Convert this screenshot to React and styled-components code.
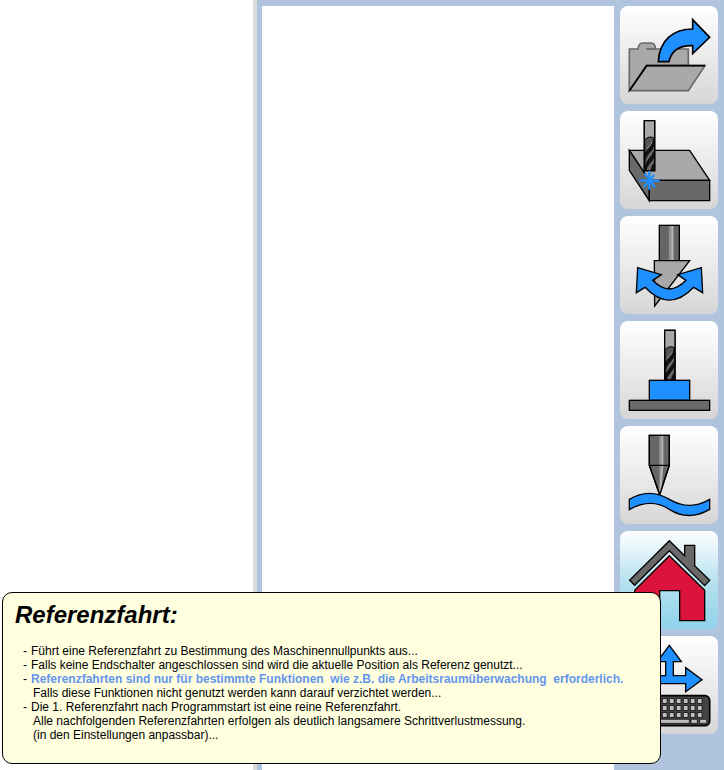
import React from "react";
import styled, { createGlobalStyle } from "styled-components";

const GlobalStyle = createGlobalStyle`
  * { box-sizing: border-box; }
  body {
    margin: 0;
    background: #ffffff;
    font-family: "Liberation Sans", Arial, sans-serif;
    color: #000000;
  }
`;

const Workspace = styled.main`
  position: relative;
  display: grid;
  grid-template-columns: minmax(0, 18fr) minmax(0, 25fr) auto;
  min-height: 100vh;
  overflow: hidden;
  background: #b0c4de;
`;

const PreviewPane = styled.section`
  background: #ffffff;
  border-right: 4px solid #dcdcdc;
`;

const ProgramPane = styled.section`
  margin: 6px 0 0 5px;
  background: #ffffff;
`;

const Toolbar = styled.nav`
  display: flex;
  flex-direction: column;
  gap: 7px;
  padding: 6px;
`;

const ToolButton = styled.button`
  width: 98px;
  height: 98px;
  padding: 0;
  border: 0;
  border-radius: 8px;
  background: ${({ $active }) =>
    $active
      ? "linear-gradient(#ffffff, #b8e2f0 50%, #8fd2ea)"
      : "linear-gradient(#ffffff, #ebebeb 50%, #d6d6d6)"};
  cursor: pointer;
`;

const Icon = styled.svg`
  display: block;
  width: 100%;
  height: 100%;
  stroke: #000000;
  stroke-width: 4;
`;

const HelpBubble = styled.aside`
  position: absolute;
  left: 2px;
  right: 63px;
  bottom: 6px;
  padding: 8px 12px 21px;
  border: 1px solid #000000;
  border-radius: 10px;
  background: #ffffe0;
`;

const HelpTitle = styled.h1`
  margin: 0 0 15px;
  font-size: 24px;
  line-height: 28px;
  font-style: italic;
  font-weight: bold;
`;

const HelpList = styled.ul`
  margin: 0;
  padding: 0 0 0 8px;
  list-style: none;
  font-size: 12px;
  line-height: 14px;
`;

const HelpItem = styled.li`
  display: grid;
  grid-template-columns: 8px 1fr;
`;

const HelpDetail = styled.div`
  padding-left: 2px;
`;

const Highlight = styled.strong`
  color: #6495ed;
  white-space: pre-wrap;
`;

function Cutter({ x, y }) {
  return (
    <g transform={`translate(${x} ${y})`}>
      <rect width="31" height="150" fill="#696969" />
      <rect width="31" height="56" fill="#a9a9a9" stroke="none" />
      <path d="M1 58Q13 44 30 52Q28 70 16 81Q5 91 1 104Z" fill="#555555" strokeWidth="3" />
      <path d="M30 54L30 74Q24 90 12 101Q4 110 1 130V104Q4 92 16 81Q27 69 30 54Z" fill="#111111" strokeWidth="1" />
      <path d="M30 88V108Q25 120 15 130Q8 138 6 149H1V138Q3 126 13 115Q25 102 30 88Z" fill="#111111" strokeWidth="1" />
      <path d="M30 124V149H19Q20 138 30 124Z" fill="#111111" strokeWidth="1" />
      <path d="M23 64Q18 74 8 84" fill="none" stroke="#7c7c7c" strokeWidth="4" />
      <rect width="31" height="150" fill="none" />
    </g>
  );
}

const OpenIcon = () => (
  <>
    <g stroke="#686868" strokeWidth="5">
      <path d="M52 272V147H78Q80 129 92 129H118Q130 129 130 147H229V196L103 197Z" fill="#a9a9a9" />
      <path d="M103 147H132" fill="none" />
      <path d="M52 272L104 197H279L229 272Z" fill="#a9a9a9" />
    </g>
    <path d="M52 272L104 197H279" fill="none" strokeWidth="5" />
    <path d="M139 185C142 120 185 87 242 87V59L293 112L242 161V137C204 136 178 151 171 185Z" fill="#1e90ff" strokeWidth="5" />
  </>
);

const ZeroIcon = () => (
  <>
    <path d="M52 136H233L293 226H112Z" fill="#a9a9a9" />
    <path d="M52 136L112 226V287L52 196Z" fill="#696969" />
    <path d="M112 226H293V287H112Z" fill="#696969" />
    <Cutter x={97} y={47} />
    <path d="M112 198V254M82 227H143" fill="none" stroke="#1e90ff" strokeWidth="7" />
    <path d="M98 205L129 247M127 209L95 247" fill="none" stroke="#1e90ff" strokeWidth="7" />
  </>
);

const SpindleIcon = () => (
  <>
    <rect x="142" y="46" width="60" height="106" fill="#666666" />
    <path d="M174 48V150" stroke="#929292" strokeWidth="7" />
    <path d="M181 48V150" stroke="#b4b4b4" strokeWidth="7" />
    <path d="M127 152H233L128 288Z" fill="#a9a9a9" />
    <path d="M77 173L148 194L122 211Q172 263 222 211L197 194L268 173L272 248L245 232Q172 309 99 232L73 248Z" fill="#1e90ff" />
  </>
);

const WorkpieceIcon = () => (
  <>
    <Cutter x={158} y={46} />
    <rect x="112" y="196" width="121" height="60" fill="#1e90ff" />
    <rect x="52" y="256" width="241" height="30" fill="#696969" />
  </>
);

const ProbeIcon = () => (
  <>
    <path d="M112 46H172V136L143 224L112 136Z" fill="#666666" />
    <path d="M145 48V220" stroke="#969696" strokeWidth="6" />
    <path d="M151 48V136L145 213" fill="none" stroke="#b4b4b4" strokeWidth="6" />
    <path d="M112 46H172V136L143 224L112 136ZM112 136H172" fill="none" />
    <path d="M52 238C92 214 132 214 172 238C217 264 254 261 293 238V268C250 293 211 293 172 268C135 244 92 246 52 269Z" fill="#1e90ff" />
  </>
);

const HomeIcon = () => (
  <>
    <path d="M172 47L218 92V61H248V122L293 166L278 182L172 77L68 181L53 166Z" fill="#696969" />
    <path d="M172 92L278 196V287H203V197H143V287H68V196Z" fill="#dc143c" />
  </>
);

const JogIcon = () => (
  <>
    <path d="M172 46L208 95H184V137H221V113L270 149L221 185V161H124V185L75 149L124 113V137H161V95H136Z" fill="#1e90ff" />
    <rect x="52" y="197" width="241" height="90" rx="14" fill="#444444" strokeWidth="5" />
    {[206, 227, 248].map((y) =>
      Array.from({ length: 10 }, (_, i) => (
        <rect key={`${y}-${i}`} x={67 + i * 21} y={y} width="14" height="14" fill="#c0c0c0" strokeWidth="2" />
      ))
    )}
    <path d="M67 268H87V280H67ZM94 268H232V280H94ZM237 268H256V280H237ZM263 268H284V280H263Z" fill="#c0c0c0" strokeWidth="2" />
  </>
);

const TOOLS = [
  { label: "Datei öffnen", Drawing: OpenIcon },
  { label: "Nullpunkt setzen", Drawing: ZeroIcon },
  { label: "Spindel", Drawing: SpindleIcon },
  { label: "Werkstück", Drawing: WorkpieceIcon },
  { label: "Oberfläche abtasten", Drawing: ProbeIcon },
  { label: "Referenzfahrt", Drawing: HomeIcon, active: true },
  { label: "Manuell verfahren", Drawing: JogIcon },
];

const HELP = [
  { text: "Führt eine Referenzfahrt zu Bestimmung des Maschinennullpunkts aus..." },
  { text: "Falls keine Endschalter angeschlossen sind wird die aktuelle Position als Referenz genutzt..." },
  {
    text: "Referenzfahrten sind nur für bestimmte Funktionen  wie z.B. die Arbeitsraumüberwachung  erforderlich.",
    highlighted: true,
    details: ["Falls diese Funktionen nicht genutzt werden kann darauf verzichtet werden..."],
  },
  {
    text: "Die 1. Referenzfahrt nach Programmstart ist eine reine Referenzfahrt.",
    details: [
      "Alle nachfolgenden Referenzfahrten erfolgen als deutlich langsamere Schrittverlustmessung.",
      "(in den Einstellungen anpassbar)...",
    ],
  },
];

export default function App() {
  return (
    <>
      <GlobalStyle />
      <Workspace>
        <PreviewPane />
        <ProgramPane />
        <Toolbar>
          {TOOLS.map(({ label, Drawing, active }) => (
            <ToolButton key={label} type="button" aria-label={label} $active={active}>
              <Icon viewBox="24 18 294 294" aria-hidden="true">
                <Drawing />
              </Icon>
            </ToolButton>
          ))}
        </Toolbar>
        <HelpBubble role="tooltip">
          <HelpTitle>Referenzfahrt:</HelpTitle>
          <HelpList>
            {HELP.map(({ text, highlighted, details = [] }) => (
              <HelpItem key={text}>
                <span>-</span>
                <div>
                  {highlighted ? <Highlight>{text}</Highlight> : text}
                  {details.map((line) => (
                    <HelpDetail key={line}>{line}</HelpDetail>
                  ))}
                </div>
              </HelpItem>
            ))}
          </HelpList>
        </HelpBubble>
      </Workspace>
    </>
  );
}
